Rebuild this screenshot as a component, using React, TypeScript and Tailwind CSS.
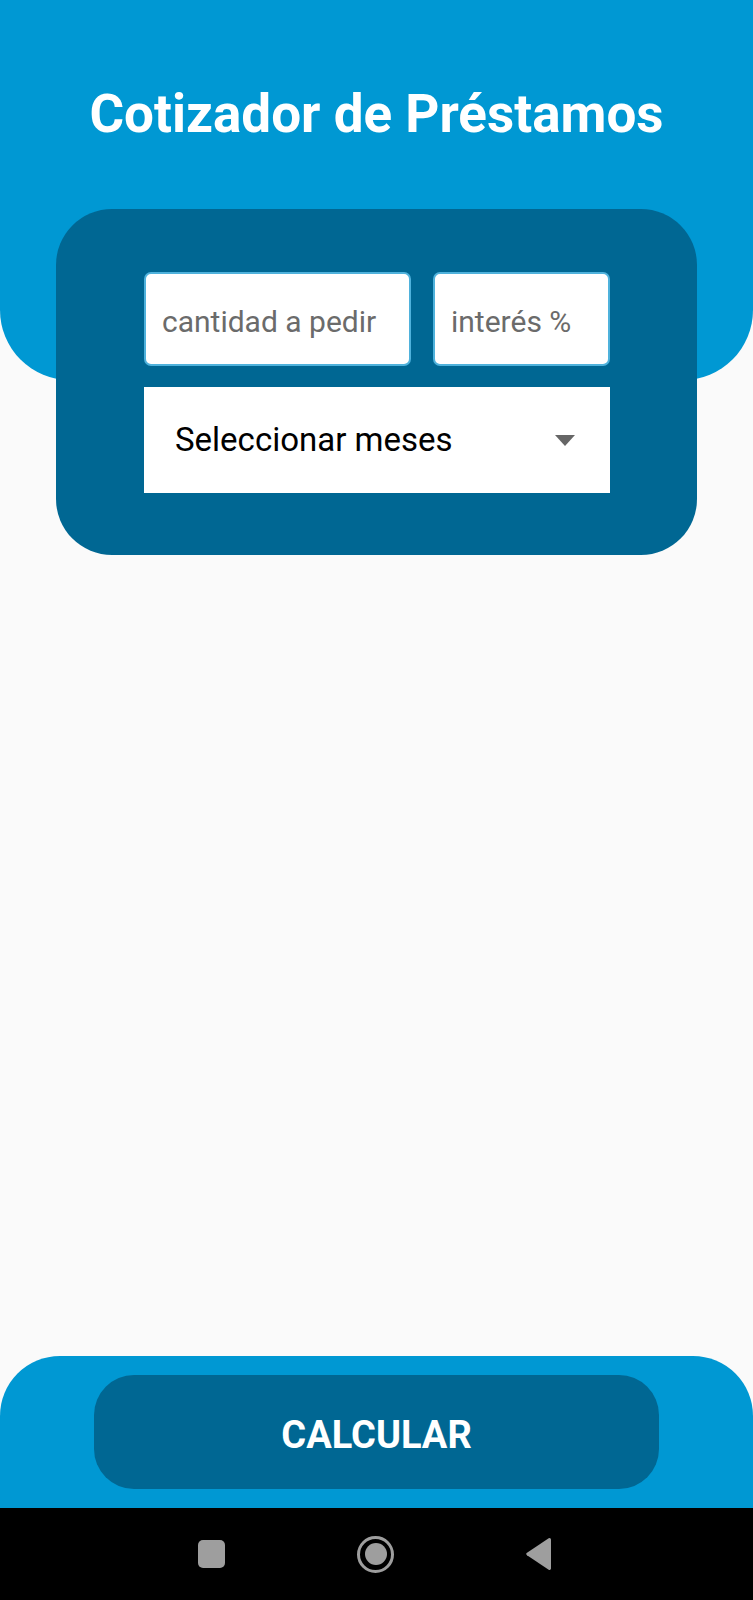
export default function App() {
  return (
    <div
      className="flex h-[1600px] flex-col bg-[#fafafa]"
      style={{ fontFamily: "Roboto, 'Noto Sans', sans-serif" }}
    >
      <header className="h-[380px] shrink-0 rounded-b-[70px] bg-[#0098d3] pt-[84px]">
        <h1 className="text-center text-[53px] font-bold leading-[60px] text-white">
          Cotizador de Préstamos
        </h1>
      </header>

      <div className="mx-[56px] -mt-[171px] h-[346px] shrink-0 rounded-[56px] bg-[#006793] pl-[88px] pr-[87px] pt-[63px]">
        <div className="flex gap-[22px]">
          <input
            placeholder="cantidad a pedir"
            className="h-[94px] w-[267px] rounded-[7px] border-2 border-[#4fb2dc] bg-white px-[16px] pt-[4px] text-[30px] text-[#222] outline-none placeholder:text-[#6b6b6b]"
          />
          <input
            placeholder="interés %"
            className="h-[94px] w-[177px] rounded-[7px] border-2 border-[#4fb2dc] bg-white px-[16px] pt-[4px] text-[30px] text-[#222] outline-none placeholder:text-[#6b6b6b]"
          />
        </div>
        <div className="mt-[21px] flex h-[106px] items-center justify-between bg-white pl-[31px] pr-[35px]">
          <span className="text-[33px] text-black">Seleccionar meses</span>
          <svg width="20" height="11" viewBox="0 0 20 11">
            <path d="M0 0h20L10 11z" fill="#666" />
          </svg>
        </div>
      </div>

      <div className="flex-1" />

      <div className="h-[152px] shrink-0 rounded-t-[60px] bg-[#0098d3] px-[94px] pt-[19px]">
        <button className="flex h-[114px] w-full items-center justify-center rounded-[40px] bg-[#006793] pt-[6px] text-[38px] font-bold text-white">
          CALCULAR
        </button>
      </div>

      <nav className="flex h-[92px] shrink-0 items-center bg-black">
        <div className="flex w-full items-center">
          <div className="ml-[198px] h-[28px] w-[27px] rounded-[5px] bg-[#9e9e9e]" />
          <div className="ml-[132px] flex h-[37px] w-[37px] items-center justify-center rounded-full border-[3px] border-[#9e9e9e]">
            <div className="h-[22px] w-[22px] rounded-full bg-[#9e9e9e]" />
          </div>
          <svg className="ml-[132px]" width="26" height="32" viewBox="0 0 26 32">
            <path d="M25 1.5v29a1.5 1.5 0 0 1-2.3 1.2L1 17.2a1.5 1.5 0 0 1 0-2.4L22.7.3A1.5 1.5 0 0 1 25 1.5z" fill="#9e9e9e" />
          </svg>
        </div>
      </nav>
    </div>
  );
}
